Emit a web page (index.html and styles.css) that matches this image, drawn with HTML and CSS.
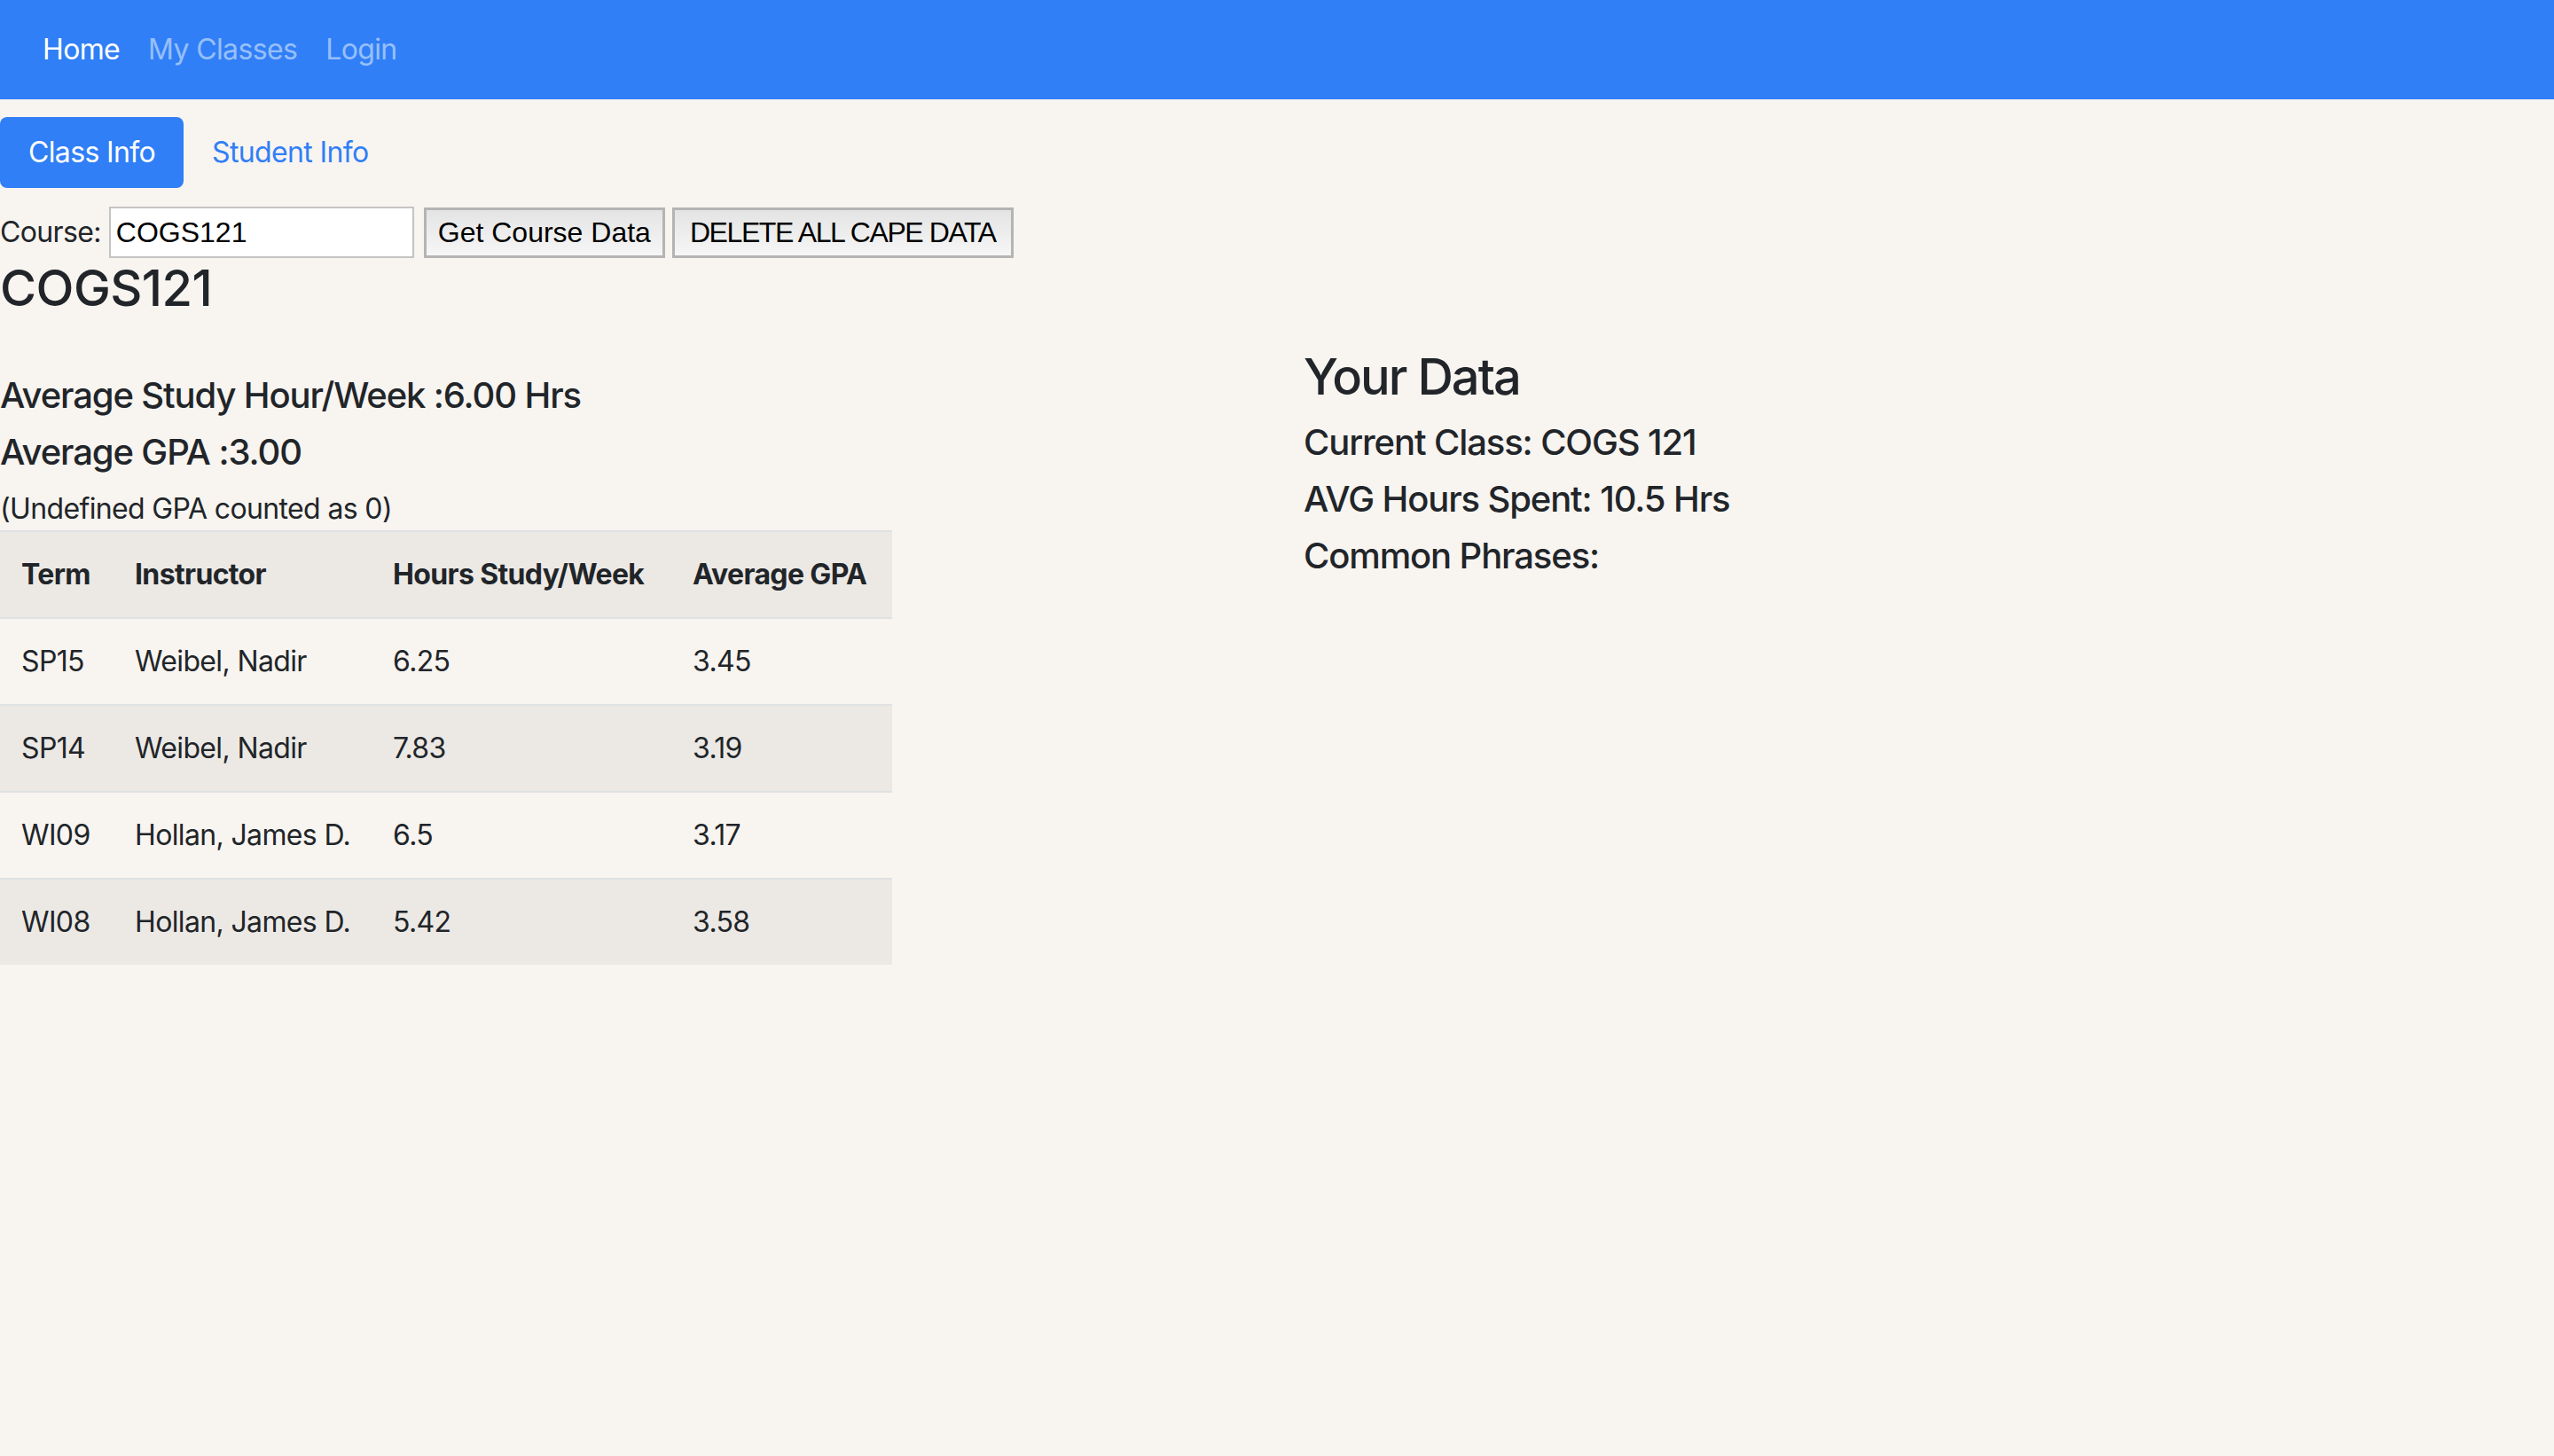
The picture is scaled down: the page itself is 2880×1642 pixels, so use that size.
FILE: index.html
```html
<!DOCTYPE html>
<html>
<head>
<meta charset="utf-8">
<title>CAPE Data</title>
<link rel="stylesheet" href="styles.css">
</head>
<body>
<nav class="navbar">
  <a class="nav-link active" href="#">Home</a>
  <a class="nav-link" href="#">My Classes</a>
  <a class="nav-link" href="#">Login</a>
</nav>
<div class="pills">
  <a class="pill active" href="#">Class Info</a>
  <a class="pill" href="#">Student Info</a>
</div>
<div class="course-form">
  <label class="course-label" for="course">Course:</label>
  <input class="course-input" id="course" type="text" value="COGS121">
  <button class="btn-plain btn-get">Get Course Data</button>
  <button class="btn-plain btn-del">DELETE ALL CAPE DATA</button>
</div>
<h3 class="h3 course-title">COGS121</h3>
<div class="row">
  <div class="col col-left">
    <h5 class="h5 first">Average Study Hour/Week :6.00 Hrs</h5>
    <h5 class="h5">Average GPA :3.00</h5>
    <p class="note">(Undefined GPA counted as 0)</p>
    <table class="table">
      <colgroup>
        <col class="c1"><col class="c2"><col class="c3"><col class="c4">
      </colgroup>
      <thead>
        <tr><th>Term</th><th>Instructor</th><th>Hours Study/Week</th><th>Average GPA</th></tr>
      </thead>
      <tbody>
        <tr><td>SP15</td><td>Weibel, Nadir</td><td>6.25</td><td>3.45</td></tr>
        <tr class="striped"><td>SP14</td><td>Weibel, Nadir</td><td>7.83</td><td>3.19</td></tr>
        <tr><td>WI09</td><td>Hollan, James D.</td><td>6.5</td><td>3.17</td></tr>
        <tr class="striped"><td>WI08</td><td>Hollan, James D.</td><td>5.42</td><td>3.58</td></tr>
      </tbody>
    </table>
  </div>
  <div class="col col-right">
    <h3 class="h3 your-data">Your Data</h3>
    <h5 class="h5">Current Class: COGS 121</h5>
    <h5 class="h5">AVG Hours Spent: 10.5 Hrs</h5>
    <h5 class="h5">Common Phrases:</h5>
  </div>
</div>
</body>
</html>
```
FILE: styles.css
```css
* { box-sizing: border-box; }
html, body {
  margin: 0;
  padding: 0;
}
body {
  background: #f8f4f0;
  color: #212529;
  font-family: Inter, "Noto Sans", sans-serif;
  font-size: 32px;
  line-height: 1.5;
  letter-spacing: -0.02em;
}
a { text-decoration: none; }

.navbar {
  height: 112px;
  background: #307ff6;
  display: flex;
  align-items: center;
  padding: 0 32px;
}
.nav-link {
  padding: 0 16px;
  color: rgba(255, 255, 255, 0.5);
}
.nav-link.active { color: #ffffff; }

.pills {
  display: flex;
  margin-top: 20px;
}
.pill {
  display: block;
  padding: 16px 32px;
  border-radius: 8px;
  color: #307ff6;
  line-height: 48px;
}
.pill.active {
  background: #307ff6;
  color: #ffffff;
}

.course-form {
  display: flex;
  align-items: center;
  margin-top: 21px;
  height: 58px;
}
.course-label { margin-right: 9px; }
.course-input {
  width: 344px;
  height: 58px;
  border: 2px solid #c4c4c4;
  background: #ffffff;
  font-family: "Liberation Sans", Arial, sans-serif;
  font-size: 32px;
  letter-spacing: 0;
  color: #000;
  padding: 0 6px;
  margin: 0 11px 0 0;
  outline: none;
}
.btn-plain {
  height: 57px;
  border: 3px solid #b4b4b4;
  background: linear-gradient(#e4e4e4, #f6f6f6);
  font-family: "Liberation Sans", Arial, sans-serif;
  font-size: 32px;
  letter-spacing: 0;
  color: #000;
  padding: 0;
  margin: 0;
  white-space: nowrap;
  text-align: center;
}
.btn-get { width: 272px; margin-right: 8px; }
.btn-del { width: 385px; letter-spacing: -1.4px; }

.h3 {
  font-size: 56px;
  font-weight: 500;
  line-height: 1.2;
  margin: 0 0 16px 0;
  letter-spacing: -0.02em;
}
.h5 {
  font-size: 40px;
  font-weight: 500;
  line-height: 1.2;
  margin: 0 0 16px 0;
  letter-spacing: -0.028em;
}
.course-title { margin-top: 1px; letter-spacing: -0.01em; }
.your-data { letter-spacing: -0.035em; }

.row {
  display: grid;
  grid-template-columns: 1440px 1440px;
}
.col-left { padding-top: 47px; }
.col-right { padding: 17px 0 0 30px; }

.note { margin: 0; line-height: 48px; }

.table {
  border-collapse: collapse;
  table-layout: fixed;
  width: 1006px;
}
.c1 { width: 128px; }
.c2 { width: 291px; }
.c3 { width: 338px; }
.c4 { width: 249px; }
.table th, .table td {
  padding: 24px;
  text-align: left;
  border-top: 2px solid #dfe1e3;
  white-space: nowrap;
  line-height: 48px;
}
.table th { font-weight: 700; }
.table thead tr { background: #ece9e5; }
.table tbody tr.striped { background: #ece9e5; }
```
